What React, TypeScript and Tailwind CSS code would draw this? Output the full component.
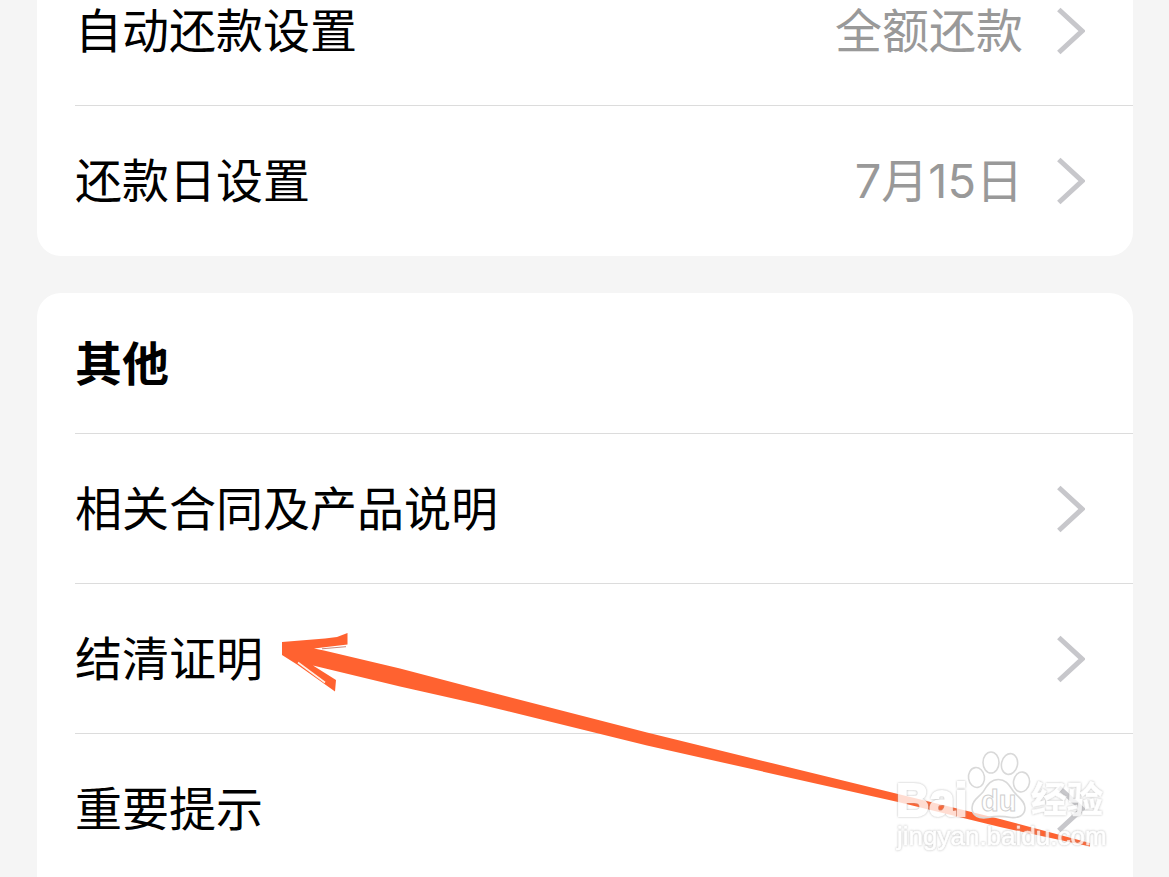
import React from "react";

function Chevron() {
  return (
    <svg className="h-12 w-7 shrink-0" viewBox="0 0 28 48" fill="none" aria-hidden="true">
      <path d="M1.800 2.500 L25 24 L1.800 45.500" stroke="#c7c7cb" strokeWidth="5" />
    </svg>
  );
}

function Row({ label, value, divided = true }: { label: string; value?: string; divided?: boolean }) {
  return (
    <li className={divided ? "border-b border-[#dcdcdc]" : "border-b border-transparent"}>
      <button type="button" className="flex h-[149px] w-full items-center pr-12 text-left">
        <span className="grow">{label}</span>
        {value && <span className="mr-[34px] text-[#999999]">{value}</span>}
        <Chevron />
      </button>
    </li>
  );
}

function Arrow() {
  return (
    <svg
      className="pointer-events-none absolute left-[280px] top-[632px] h-[216px] w-[812px]"
      viewBox="280 632 812 216"
      aria-hidden="true"
    >
      <path
        fill="#ff6230"
        d="M282 642 L325 638.5 L337 637 L347.5 633 V644.5 L314 648.5 L324 650.5 L400 668.5 L480 689.5 L647 732.5 L898 794 L1000 819 L1090 843 V846.5 L1000 827 L898 802 L647 745.5 L480 704.5 L400 686.500 L313 665.5 L336 680 L335 691.5 L297 664.500 L282 655 Z"
      />
      <path d="M322 648.8 L346 646.7" stroke="#c4796a" strokeWidth="0.9" />
      <path d="M298 662.500 L325 682.5" stroke="#fff1e8" strokeWidth="1.6" />
    </svg>
  );
}

function Watermark() {
  return (
    <svg
      className="pointer-events-none absolute bottom-[19px] right-[59px] h-[112px] w-[218px]"
      viewBox="892 746 218 112"
      role="img"
      aria-label="Baidu 经验"
    >
      <g fill="#ffffff" fillOpacity="0.7" stroke="#d9d9d9" strokeWidth="1.6">
        <ellipse cx="976.5" cy="777.5" rx="8" ry="10" transform="rotate(-8 976.5 777.5)" />
        <ellipse cx="991" cy="762.5" rx="8" ry="10.5" />
        <ellipse cx="1009.5" cy="764" rx="8" ry="10.5" transform="rotate(12 1009.5 764)" />
        <ellipse cx="1021.5" cy="782" rx="8" ry="10" transform="rotate(8 1021.5 782)" />
        <path d="M998.500 779.500 C1007 779.500 1010 787 1014 792 C1019 798 1025 801 1025 808 C1025 816 1018 818 1011 817.500 C1003 816 995 816 988 817.500 C979 819 972 816 972 808 C972 800 979 797 983 792 C987 786 990 779.500 998.500 779.500 Z" />
      </g>
      <text
        x="981"
        y="811"
        fontSize="29"
        fontFamily="Liberation Sans, sans-serif"
        fontWeight="700"
        fill="#ffffff"
        stroke="#cfcfcf"
        strokeWidth="1"
      >
        du
      </text>
      <g
        className="[filter:drop-shadow(0_0_1px_#a8a8a8)]"
        opacity="0.78"
        fill="#ffffff"
        stroke="#ffffff"
        strokeWidth="2"
      >
        <text x="896" y="816" fontSize="46" fontWeight="700" fontFamily="Liberation Sans, sans-serif">
          Bai
        </text>
        <text x="1031" y="813" fontSize="36" fontWeight="700" fontFamily="Noto Sans CJK SC, sans-serif" strokeWidth="0.500">
          经验
        </text>
      </g>
      <text
        className="[filter:drop-shadow(0_0_1px_#a8a8a8)]"
        x="897"
        y="845"
        fontSize="26"
        fontFamily="Liberation Sans, sans-serif"
        fill="#ffffff"
        stroke="#ffffff"
        strokeWidth="0.6"
        opacity="0.8"
      >
        jingyan.baidu.com
      </text>
    </svg>
  );
}

export default function App() {
  return (
    <main className="relative h-screen overflow-hidden bg-[#f5f5f5] font-['Inter','Noto_Sans_CJK_SC',sans-serif] text-[47px] leading-none text-black">
      <div className="-mt-11 flex flex-col gap-[37px] pl-[37px] pr-9">
        <section className="rounded-3xl bg-white pl-[38px]">
          <ul>
            <Row label="自动还款设置" value="全额还款" />
            <Row label="还款日设置" value="7月15日" divided={false} />
          </ul>
        </section>
        <section className="rounded-3xl bg-white pb-8 pl-[38px]">
          <h2 className="flex h-[141px] items-center border-b border-[#dcdcdc] font-bold">其他</h2>
          <ul>
            <Row label="相关合同及产品说明" />
            <Row label="结清证明" />
            <Row label="重要提示" divided={false} />
          </ul>
        </section>
      </div>
      <Arrow />
      <Watermark />
    </main>
  );
}
